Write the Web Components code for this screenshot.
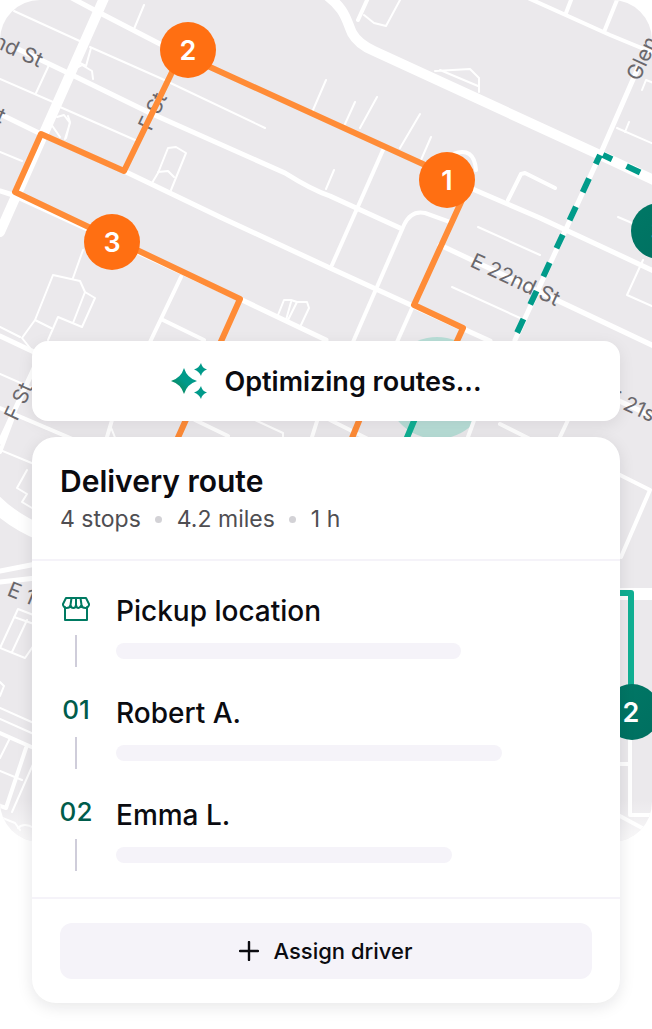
<!DOCTYPE html>
<html lang="en">
<head>
<meta charset="utf-8">
<meta name="viewport" content="width=device-width, initial-scale=1">
<title>Delivery route</title>
<style>
  body { margin: 0; background: #fff; font-family: Inter, "Liberation Sans", sans-serif; color: #0b0b10; }
</style>
</head>
<body>
<route-screen>
  <route-map slot="map"></route-map>
  <status-card>Optimizing routes...</status-card>
  <delivery-card>
    <span slot="title">Delivery route</span>
    <route-meta slot="meta"><span>4 stops</span><span>4.2 miles</span><span>1 h</span></route-meta>
    <route-stop bar="345"><store-icon slot="marker"></store-icon>Pickup location</route-stop>
    <route-stop bar="386"><span slot="marker">01</span>Robert A.</route-stop>
    <route-stop bar="336"><span slot="marker">02</span>Emma L.</route-stop>
    <assign-button slot="footer">Assign driver</assign-button>
  </delivery-card>
</route-screen>

<script>
const define = (name, html, setup) => {
  const template = document.createElement('template');
  template.innerHTML = html;
  customElements.define(name, class extends HTMLElement {
    constructor() {
      super();
      this.attachShadow({ mode: 'open' }).append(template.content.cloneNode(true));
    }
    connectedCallback() { if (setup) setup(this, this.shadowRoot); }
  });
};

define('route-screen', `
  <style>
    :host { display: grid; grid-template-columns: 100%; overflow: hidden; }
    .map, .cards { grid-area: 1 / 1; }
    .cards { display: flex; flex-direction: column; gap: 16px; padding: 341px 32px 26px; position: relative; }
  </style>
  <div class="map"><slot name="map"></slot></div>
  <main class="cards"><slot></slot></main>`);

define('route-map', `
  <style>
    :host { display: block; overflow: hidden; border-radius: 40px; background: #ebe9ec; aspect-ratio: 652 / 842; }
    svg { display: block; width: 100%; height: 100%; }
    .road { fill: none; stroke: #fff; stroke-linecap: round; stroke-linejoin: round; }
    .route { fill: none; stroke: #ff8c37; stroke-width: 6; stroke-linejoin: round; }
    .label { font-size: 21px; fill: #6a686c; }
    .pin { font-size: 27px; font-weight: 600; fill: #fff; text-anchor: middle; }
  </style>
  <svg viewBox="0 0 652 842" preserveAspectRatio="xMidYMin slice" role="img" aria-label="Street map with delivery routes">
    <defs>
      <linearGradient id="deep" x1="0" y1="0" x2="1" y2="1"><stop offset="0" stop-color="#007866"/><stop offset="1" stop-color="#006f60"/></linearGradient>
      <linearGradient id="fade" x1="0" y1="0" x2="0" y2="1"><stop offset="0" stop-color="#fff" stop-opacity="0"/><stop offset="1" stop-color="#fff" stop-opacity=".7"/></linearGradient>
    </defs>
    <circle cx="437" cy="388" r="51" fill="#b8ded7"/>
    <g class="road" stroke-width="10">
      <path d="M105-4 44 133 0 232"/>
      <path d="M322-8C346 8 346 20 352 33Q358 44 374 51L600 155 656 181"/>
    </g>
    <path class="road" stroke-width="16" d="M-6 502Q14 522 44 534"/>
    <path class="road" stroke-width="12" d="M600 594H660"/>
    <g class="road" stroke-width="5">
      <path d="M68-4 100 13 160 44M447 178 540 218 656 272"/>
      <path d="M18 49 66 72 150 113 285 173Q312 190 330 196L400 228"/>
      <path d="M-4 112 41 134 124 171 222 218 330 268 413 306 490 341"/>
      <path d="M0 191 13 195 240 299 326 340"/>
      <path d="M638 68 600 155 515 340"/>
      <path d="M440 245 656 347M600 392 656 418"/>
      <path d="M0 336 34 352M36 364 0 442M0 571 36 564M0 582 36 578"/>
    </g>
    <g class="road" stroke-width="4">
      <path d="M383 150 352 220 332 265M353 342 404 225Q411 210 425 213L450 222M413 306 397 342"/>
      <path d="M181 277 150 342M163 320 204 340M528-2 610 35 656 54M571 0 566 13M617 0 604 32"/>
      <path d="M508 200 521 174 525 173 555 188M368-2 358 20M453 154Q474 146 476 170"/>
      <path d="M0 408 110 455M12 420 0 452M112 420 107 437M318 418 312 437M476 415 468 437M568 420 560 437M330 420 370 440M195 420 228 436M500 424 532 440M618 474 650 490 621 557"/>
      <path d="M0 733 36 749M26 748 6 808 0 806M630 735V815H656M618 764H630M618 815 644 829"/>
    </g>
    <g class="road" stroke-width="2">
      <path d="M14 11 84 43M90 47 160 78 265 128M49 65 36 93M0 79 53 102M60 107 135 140M0 152 22 161"/>
      <path d="M91 48 86 66 78 62M76 68 82 65 92 71 93 79M68 116 70 122 66 138M57 117 64 115 70 123 65 139M51 124 60 137M152 183 158 173 168 148 176 147 186 153 171 190M158 172 168 171 174 177"/>
      <path d="M144 5 134 29M326 80 313 110M355 102 345 124M377 97 360 128M420 114 400 148M431 137 421 160M334 170 326 189"/>
      <path d="M364 15 374 23 386 26 400 0M435 71 470 69 479 78V92M440 70 478 86"/>
      <path d="M478 227 540 255M452 287 520 318M643 260 627 295 656 308M618 217 632 223M617 128 656 145M625 132 629 122M642 90 646 80 656 84"/>
      <path d="M83 250 73 278M53 275 80 281 85 292 95 298 82 327 58 317 48 340M35 320 53 275M35 320 51 328M35 320 22 338 30 348M85 292 73 323M0 327 20 337"/>
      <path d="M278 315 284 300 291 300 297 302 288 320M297 302 307 302 309 308 301 325M291 302 286 320M0 374 32 388M110 425 116 440M255 420 283 433 283 438"/>
      <path d="M0 450 34 464M27 470 17 488 27 494 22 502 32 508M18 609 0 648 25 658 34 645M18 609 36 616M14 617 34 624M27 620 12 652M0 682 4 686 0 696M0 708 36 724M0 719 36 735M10 738 0 758M0 771 22 780M34 762 12 812M0 817 15 823 20 830M18 828Q24 822 34 828"/>
    </g>
    <g class="label">
      <text transform="translate(-8 46) rotate(25)">nd St</text>
      <text transform="translate(-15 116) rotate(25)">st</text>
      <text transform="translate(151 132) rotate(-65)">F St</text>
      <text transform="translate(639 82) rotate(-65)">Glen Ave</text>
      <text transform="translate(469 266) rotate(25)">E 22nd St</text>
      <text transform="translate(17 422) rotate(-65)">F St</text>
      <text transform="translate(605 401) rotate(25)">E 21st St</text>
      <text transform="translate(6 595) rotate(22)">E 19th St</text>
    </g>
    <path class="route" d="M447 175 188 57 176 64 124 171 41 134 15 192 240 299 176 442"/>
    <path class="route" d="M462 200 414 305 463 328 440 378M361 416 352 438"/>
    <path fill="none" stroke="#009b8a" stroke-width="6" stroke-dasharray="15 16" stroke-dashoffset="5" d="M600 155 516 335M603 155 656 180"/>
    <path fill="none" stroke="#10b093" stroke-width="6" stroke-linejoin="round" d="M416 416 406 440M600 593H631V700"/>
    <circle cx="188" cy="50" r="28" fill="#ff6f12"/>
    <circle cx="447" cy="180" r="28" fill="#ff6f12"/>
    <circle cx="112" cy="242" r="28" fill="#ff6f12"/>
    <circle cx="659" cy="231" r="28" fill="url(#deep)"/>
    <circle cx="632" cy="712" r="28" fill="url(#deep)"/>
    <rect y="800" width="652" height="42" fill="url(#fade)"/>
    <g class="pin">
      <text x="188" y="60">2</text><text x="447" y="190">1</text><text x="112" y="252">3</text>
      <text x="659" y="241">3</text><text x="631" y="722">2</text>
    </g>
  </svg>`);

define('status-card', `
  <style>
    :host { display: flex; align-items: center; justify-content: center; gap: 16px; height: 80px;
      border-radius: 16px; background: #fff; box-shadow: 0 4px 16px rgba(20, 16, 30, .08);
      font-size: 27px; font-weight: 600; }
    svg { flex: none; width: 38px; height: 38px; }
  </style>
  <svg viewBox="0 0 38 38" aria-hidden="true">
    <defs><linearGradient id="g" x1="0" y1="1" x2="1" y2="0"><stop offset=".2" stop-color="#0b8a60"/><stop offset=".5" stop-color="#009a8a"/></linearGradient></defs>
    <g fill="url(#g)">
      <path d="M14 6Q17 16 27 19 17 22 14 32 11 22 1 19 11 16 14 6Z"/>
      <path fill="#009a8a" d="M31 1Q32 6 37 7.500 32 9 31 14 29 9 24 7.500 29 6 31 1ZM31 24Q32 29 37 30.500 32 32 31 37 29 32 24 30.500 29 29 31 24Z"/>
    </g>
  </svg>
  <span role="status"><slot></slot></span>`);

define('delivery-card', `
  <style>
    :host { display: block; border-radius: 24px; background: #fff; box-shadow: 0 4px 16px rgba(20, 16, 30, .1); }
    header { padding: 26px 28px 23px; border-bottom: 2px solid #f5f3f9; }
    h1 { margin: 0; font-size: 30px; line-height: 36px; font-weight: 600; }
    .stops { display: flex; flex-direction: column; gap: 28px; padding: 32px 28px 26px; }
    footer { padding: 24px 28px; border-top: 2px solid #f5f3f9; }
  </style>
  <header><h1><slot name="title"></slot></h1><slot name="meta"></slot></header>
  <div class="stops"><slot></slot></div>
  <footer><slot name="footer"></slot></footer>`);

define('route-meta', `
  <style>
    :host { display: flex; gap: 36px; font-size: 23px; line-height: 34px; color: #4f4e52; padding-top: 3px; }
    ::slotted(span) { position: relative; }
    ::slotted(span:not(:first-child))::before { content: ""; position: absolute; left: -22px; top: 14px; width: 7px; height: 7px; border-radius: 50%; background: #d3d2d6; }
  </style>
  <slot></slot>`);

define('route-stop', `
  <style>
    :host { display: grid; grid-template-columns: 32px 1fr; column-gap: 24px; height: 74px; }
    .marker { display: flex; flex-direction: column; align-items: center; justify-content: space-between;
      font-size: 26px; line-height: 30px; font-weight: 500; color: #005c4b; }
    .line { width: 2px; height: 32px; background: #cfcdda; }
    h2 { margin: 0 0 14px; font-size: 28px; line-height: 36px; font-weight: 500; }
    .bar { max-width: 100%; height: 16px; border-radius: 8px; background: #f5f3f9; }
  </style>
  <div class="marker"><slot name="marker"></slot><span class="line"></span></div>
  <div><h2><slot></slot></h2><div class="bar"></div></div>`,
  (host, root) => { root.querySelector('.bar').style.width = host.getAttribute('bar') + 'px'; });

define('store-icon', `
  <style>:host { display: block; } svg { display: block; width: 28px; height: 32px; }</style>
  <svg viewBox="0 0 28 32" fill="none" stroke="#007a62" stroke-width="2" stroke-linejoin="round" stroke-linecap="round" aria-hidden="true">
    <path d="M3 14V27H25V14M4 5H24L27 11V12Q26 15 23.500 15 20 15 19.500 12 18 15 16.500 15 14.500 15 14 12 13.500 15 11.500 15 9 15 8.500 12 8 15 4.500 15 2 15 1 12V11ZM8.500 12 9.500 5M14 12V5M19.500 12 18.500 5"/>
  </svg>`);

define('assign-button', `
  <style>
    :host { display: block; }
    button { display: flex; align-items: center; justify-content: center; gap: 14px; width: 100%; height: 56px;
      border: 0; border-radius: 12px; background: #f5f3f9; color: inherit; font: 500 22px/28px Inter, "Liberation Sans", sans-serif; cursor: pointer; }
    svg { width: 20px; height: 20px; }
  </style>
  <button type="button">
    <svg viewBox="0 0 20 20" fill="none" stroke="currentColor" stroke-width="2.400" stroke-linecap="round" aria-hidden="true"><path d="M10 1V19M1 10H19"/></svg>
    <span><slot></slot></span>
  </button>`);
</script>
</body>
</html>
